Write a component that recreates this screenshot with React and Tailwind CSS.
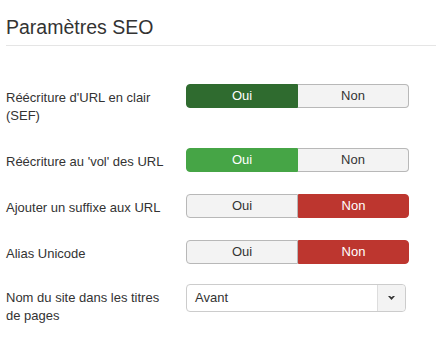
import React from 'react';

const font = { fontFamily: '"Liberation Sans", Arial, sans-serif' };

const Toggle = ({ value }) => {
  const yesActive = value === 'oui' || value === 'oui-dark';
  const yesCls =
    value === 'oui-dark'
      ? 'bg-[#2f6b2f] border-[#2f6b2f] text-white'
      : value === 'oui'
      ? 'bg-[#46a546] border-[#46a546] text-white'
      : 'bg-[#f3f3f3] border-[#b8b8b8] text-[#333]';
  const noCls = yesActive
    ? 'bg-[#f3f3f3] border-[#b8b8b8] text-[#333]'
    : 'bg-[#bd362f] border-[#bd362f] text-white';

  return (
    <div className="flex w-[223px] h-[24px] text-[13px]">
      <div className={`w-[112px] flex items-center justify-center border rounded-l-[4px] ${yesCls}`}>
        Oui
      </div>
      <div className={`w-[111px] flex items-center justify-center border rounded-r-[4px] ${noCls} ${yesActive ? 'border-l-0' : ''}`}>
        Non
      </div>
    </div>
  );
};

const Row = ({ label, children, className }) => (
  <div className={`flex items-start ${className}`}>
    <div className="w-[180px] pt-[5px] pr-[16px] leading-[18px] text-[13px] text-[#333]">
      {label}
    </div>
    {children}
  </div>
);

export default function App() {
  return (
    <div className="bg-white w-[437px] h-[339px] pl-[6px] pr-[1px]" style={font}>
      <div className="pt-[15px] pb-[6px] border-b border-[#e5e5e5]">
        <h3 className="text-[19.5px] leading-[24px] text-[#333] font-normal">Paramètres SEO</h3>
      </div>

      <div className="pt-[38px]">
        <Row label="Réécriture d'URL en clair (SEF)" className="mb-[23px]">
          <Toggle value="oui-dark" />
        </Row>
        <Row label="Réécriture au 'vol' des URL" className="mb-[22px]">
          <Toggle value="oui" />
        </Row>
        <Row label="Ajouter un suffixe aux URL" className="mb-[22px]">
          <Toggle value="non" />
        </Row>
        <Row label="Alias Unicode" className="mb-[20px]">
          <Toggle value="non" />
        </Row>
        <Row label="Nom du site dans les titres de pages">
          <div className="flex w-[220px] h-[28px] border border-[#ccc] rounded-[4px] text-[13px] text-[#333]">
            <div className="flex-1 flex items-center pl-[8px]">Avant</div>
            <div className="w-[28px] flex items-center justify-center border-l border-[#ddd] bg-[#f3f3f3] rounded-r-[4px]">
              <svg width="7" height="4" viewBox="0 0 7 4">
                <path d="M0 0 H2 L3.5 1.3 L5 0 H7 L3.5 4 Z" fill="#333" />
              </svg>
            </div>
          </div>
        </Row>
      </div>
    </div>
  );
}
